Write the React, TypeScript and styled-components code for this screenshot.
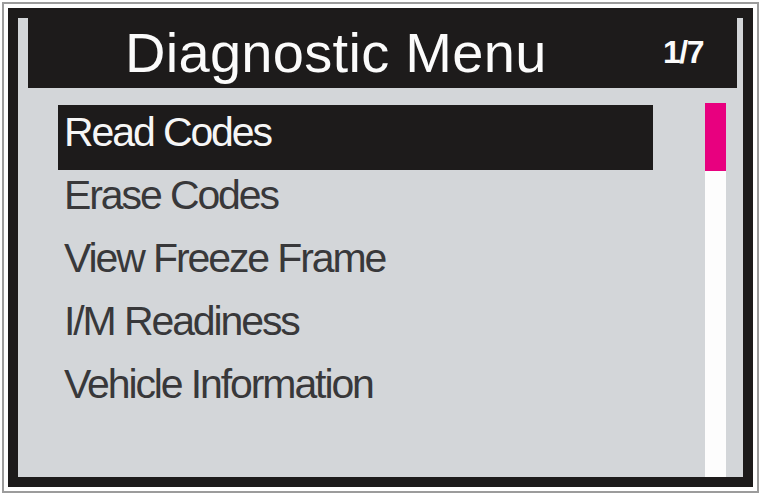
import { createGlobalStyle, styled } from "styled-components";

const GlobalStyle = createGlobalStyle`
  html, body {
    margin: 0;
    padding: 0;
    background: #ffffff;
  }
  body {
    font-family: "Liberation Sans", Arial, Helvetica, sans-serif;
  }
`;

const Page = styled.div`
  width: 764px;
  height: 495px;
  padding: 2px 0 0 2px;
  box-sizing: border-box;
  background: #ffffff;
`;

const Frame = styled.div`
  width: 757px;
  height: 491px;
  box-sizing: border-box;
  border: 2px solid #9c9c9c;
  padding: 4px;
  background: #ffffff;
`;

const Screen = styled.div`
  height: 100%;
  box-sizing: border-box;
  border: 10px solid #1d1b1b;
  background: #d3d6d9;
  display: flex;
  flex-direction: column;
`;

const Header = styled.div`
  height: 70px;
  margin: 0 6px 0 10px;
  background: #1d1b1b;
  color: #fbfbfb;
  display: flex;
  align-items: flex-start;
  padding: 0 34px 0 97px;
`;

const Title = styled.h1`
  flex: 1;
  margin: 0;
  font-size: 56px;
  font-weight: 400;
  line-height: 70px;
  letter-spacing: 0.3px;
`;

const PageCount = styled.span`
  margin-top: 18px;
  font-size: 32px;
  font-weight: 700;
  line-height: 1;
  letter-spacing: -1.5px;
`;

const Body = styled.div`
  flex: 1;
  display: flex;
  padding-top: 15px;
`;

const MenuList = styled.ul`
  list-style: none;
  margin: 2px 0 0 40px;
  padding: 0;
  width: 596px;
`;

const MenuItem = styled.li<{ $selected: boolean }>`
  box-sizing: border-box;
  padding: 0 0 9px 6px;
  font-size: 41px;
  line-height: 54px;
  letter-spacing: -2.1px;
  white-space: nowrap;
  color: ${(p) => (p.$selected ? "#f6f6f6" : "#38383a")};
  background: ${(p) => (p.$selected ? "#1d1b1b" : "transparent")};
  height: ${(p) => (p.$selected ? "65px" : "63px")};
  margin-bottom: ${(p) => (p.$selected ? "-2px" : "0")};
`;

const ScrollTrack = styled.div`
  width: 21px;
  margin: 0 17px 0 52px;
  background: #fdfdfd;
`;

const ScrollThumb = styled.div`
  height: 68px;
  background: #e8007f;
`;

const items = [
  "Read Codes",
  "Erase Codes",
  "View Freeze Frame",
  "I/M Readiness",
  "Vehicle Information",
];

const App = () => {
  const selected = 0;

  return (
    <>
      <GlobalStyle />
      <Page>
        <Frame>
          <Screen>
            <Header>
              <Title>Diagnostic Menu</Title>
              <PageCount>1/7</PageCount>
            </Header>
            <Body>
              <MenuList>
                {items.map((item, i) => (
                  <MenuItem key={item} $selected={i === selected}>
                    {item}
                  </MenuItem>
                ))}
              </MenuList>
              <ScrollTrack>
                <ScrollThumb />
              </ScrollTrack>
            </Body>
          </Screen>
        </Frame>
      </Page>
    </>
  );
};

export default App;
